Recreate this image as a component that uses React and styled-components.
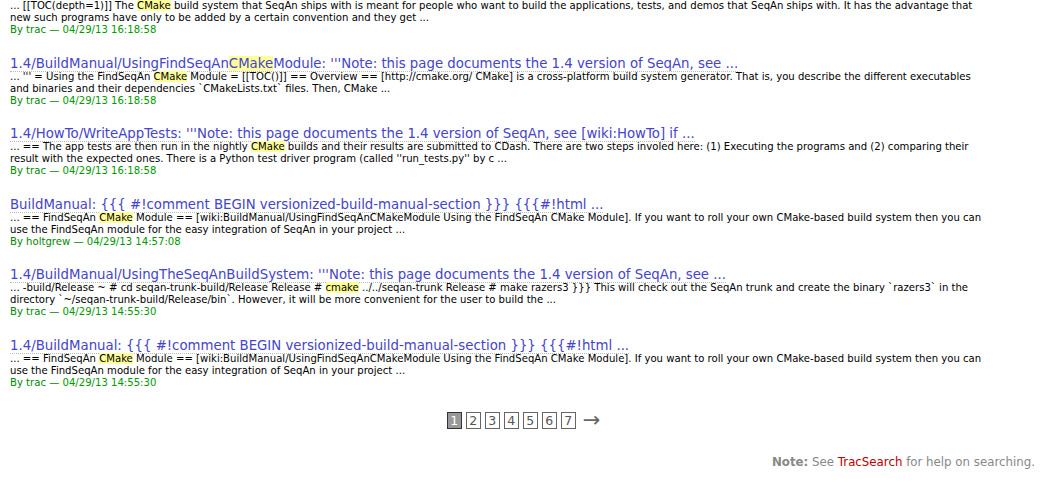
import React from "react";
import styled, { createGlobalStyle } from "styled-components";

const Global = createGlobalStyle`
  html, body { margin: 0; padding: 0; background: #fff; }
  body { font-family: "DejaVu Sans", Verdana, sans-serif; color: #000; }
`;

const Page = styled.div`
  padding: 0 22px 0 10px;
`;

const Results = styled.dl`
  margin: 0;
`;

const Title = styled.dt`
  font-size: 13.3px;
  line-height: 15px;
  white-space: nowrap;
`;

const TitleLink = styled.a`
  color: #44c;
  text-decoration: none;
  border-bottom: 1px dotted #bbb;
`;

const Excerpt = styled.dd`
  margin: 0 0 19.5px 0;
  font-size: 10.1px;
  line-height: 12px;
`;

const Line = styled.span`
  display: block;
  white-space: nowrap;
`;

const Mark = styled.span`
  background: #ff9;
`;

const Byline = styled.span`
  display: block;
  color: #080;
`;

const DateText = styled.span`
  color: #090;
`;

const Paging = styled.div`
  display: flex;
  justify-content: center;
  align-items: center;
  gap: 4px;
  padding-top: 4px;
  margin-left: 2px;
`;

const PageBox = styled.a`
  box-sizing: border-box;
  width: 15px;
  height: 17px;
  display: flex;
  align-items: center;
  justify-content: center;
  font-size: 12.5px;
  text-decoration: none;
  border: 1px solid ${(p) => (p.$current ? "#333" : "#666")};
  background: ${(p) => (p.$current ? "#999" : "#fff")};
  color: ${(p) => (p.$current ? "#fff" : "#555")};
`;

const Arrow = styled.a`
  font-size: 21px;
  color: #666;
  text-decoration: none;
  margin-left: 3px;
  line-height: 17px;
`;

const Note = styled.p`
  margin: 26px 0 0;
  text-align: right;
  font-size: 11.8px;
  line-height: 14px;
  color: #888;
`;

const NoteLabel = styled.strong`
  font-weight: bold;
`;

const NoteLink = styled.a`
  color: #b00;
  text-decoration: none;
  border-bottom: 1px dotted #bbb;
`;

const hl = (text) =>
  text.split("§").map((part, i) =>
    i % 2 === 1 ? <Mark key={i}>{part}</Mark> : <React.Fragment key={i}>{part}</React.Fragment>
  );

const buildLines = [
  "... == FindSeqAn §CMake§ Module == [wiki:BuildManual/UsingFindSeqAnCMakeModule Using the FindSeqAn CMake Module]. If you want to roll your own CMake-based build system then you can",
  "use the FindSeqAn module for the easy integration of SeqAn in your project ...",
];

const entries = [
  {
    title: null,
    lines: [
      "... [[TOC(depth=1)]] The §CMake§ build system that SeqAn ships with is meant for people who want to build the applications, tests, and demos that SeqAn ships with. It has the advantage that",
      "new such programs have only to be added by a certain convention and they get ...",
    ],
    author: "trac",
    date: "04/29/13 16:18:58",
  },
  {
    title: "1.4/BuildManual/UsingFindSeqAn§CMake§Module: '''Note: this page documents the 1.4 version of SeqAn, see ...",
    lines: [
      "... ''' = Using the FindSeqAn §CMake§ Module = [[TOC()]] == Overview == [http://cmake.org/ CMake] is a cross-platform build system generator. That is, you describe the different executables",
      "and binaries and their dependencies `CMakeLists.txt` files. Then, CMake ...",
    ],
    author: "trac",
    date: "04/29/13 16:18:58",
  },
  {
    title: "1.4/HowTo/WriteAppTests: '''Note: this page documents the 1.4 version of SeqAn, see [wiki:HowTo] if ...",
    lines: [
      "... == The app tests are then run in the nightly §CMake§ builds and their results are submitted to CDash. There are two steps involed here: (1) Executing the programs and (2) comparing their",
      "result with the expected ones. There is a Python test driver program (called ''run_tests.py'' by c ...",
    ],
    author: "trac",
    date: "04/29/13 16:18:58",
  },
  {
    title: "BuildManual: {{{ #!comment BEGIN versionized-build-manual-section }}} {{{#!html ...",
    lines: buildLines,
    author: "holtgrew",
    date: "04/29/13 14:57:08",
  },
  {
    title: "1.4/BuildManual/UsingTheSeqAnBuildSystem: '''Note: this page documents the 1.4 version of SeqAn, see ...",
    lines: [
      "... -build/Release ~ # cd seqan-trunk-build/Release Release # §cmake§ ../../seqan-trunk Release # make razers3 }}} This will check out the SeqAn trunk and create the binary `razers3` in the",
      "directory `~/seqan-trunk-build/Release/bin`. However, it will be more convenient for the user to build the ...",
    ],
    author: "trac",
    date: "04/29/13 14:55:30",
  },
  {
    title: "1.4/BuildManual: {{{ #!comment BEGIN versionized-build-manual-section }}} {{{#!html ...",
    lines: buildLines,
    author: "trac",
    date: "04/29/13 14:55:30",
  },
];

export default function App() {
  return (
    <>
      <Global />
      <Page>
        <Results>
          {entries.map((e, i) => (
            <React.Fragment key={i}>
              {e.title && (
                <Title>
                  <TitleLink href="#">{hl(e.title)}</TitleLink>
                </Title>
              )}
              <Excerpt>
                {e.lines.map((l, j) => (
                  <Line key={j}>{hl(l)}</Line>
                ))}
                <Byline>
                  By {e.author} — <DateText>{e.date}</DateText>
                </Byline>
              </Excerpt>
            </React.Fragment>
          ))}
        </Results>
        <Paging>
          {[1, 2, 3, 4, 5, 6, 7].map((n) => (
            <PageBox key={n} href="#" $current={n === 1}>
              {n}
            </PageBox>
          ))}
          <Arrow href="#">→</Arrow>
        </Paging>
        <Note>
          <NoteLabel>Note:</NoteLabel> See <NoteLink href="#">TracSearch</NoteLink> for help on searching.
        </Note>
      </Page>
    </>
  );
}
